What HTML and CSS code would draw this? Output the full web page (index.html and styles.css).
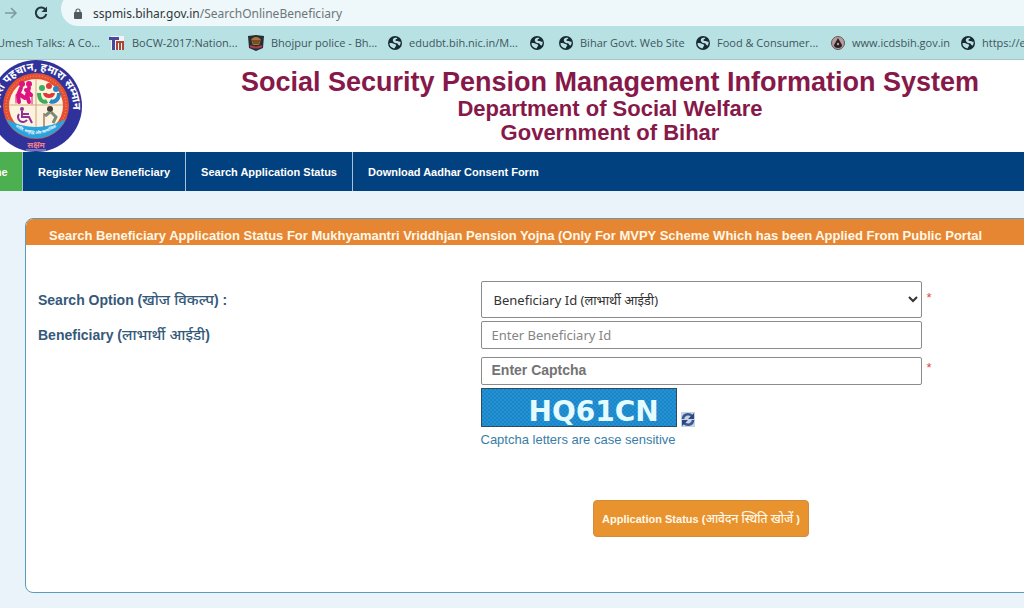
FILE: index.html
```html
<!DOCTYPE html>
<html lang="en">
<head>
<meta charset="utf-8">
<title>Social Security Pension Management Information System</title>
<link rel="stylesheet" href="styles.css">
</head>
<body>
<svg class="defs" width="0" height="0" aria-hidden="true">
  <symbol id="globe" viewBox="0 0 14 14">
    <circle cx="7" cy="7" r="7" fill="#182a30"/>
    <path d="M5 3C6 1.800 8 1.600 9.300 2.100 9.300 3.300 7.600 3.200 7.400 4c-.2.900 1 1 2 1.100 1.500.2 2.300.9 3.200.7.100 1.600-.2 2.600-.8 3.600-1.100.2-1.700-.4-2-1.300C9.400 7 8.200 7.300 7 6.900 5.700 6.500 4.200 5.200 5 3ZM1.400 7.300c1.500-.4 3.200-.3 4.300.4.900.6 2.400.5 2.500 1.500.1 1-.8 1.200-1.100 2-.2.600-.3 1-.8 1.200C3.600 12.200 1.500 10 1.400 7.300Z" fill="#b8e1e4"/>
  </symbol>
</svg>
<div class="browser">
  <div class="toolbar">
    <button class="tool" aria-label="Forward"><svg width="14" height="12" viewBox="0 0 14 12"><path d="M1 6h11M7 1l5 5-5 5" fill="none" stroke="#7d9a9f" stroke-width="1.500"/></svg></button>
    <button class="tool" aria-label="Reload"><svg width="14" height="14" viewBox="0 0 14 14"><path d="M11.600 4A5.300 5.300 0 1 0 12.300 8" fill="none" stroke="#24363b" stroke-width="2"/><path d="M13 .5V6H7.500Z" fill="#24363b"/></svg></button>
    <div class="address">
      <svg width="8" height="11" viewBox="0 0 8 11"><rect y="4" width="8" height="7" rx="1" fill="#50595c"/><path d="M2 5V3a2 2 0 0 1 4 0v2" fill="none" stroke="#50595c" stroke-width="1.200"/></svg>
      <span>sspmis.bihar.gov.in<span class="path">/SearchOnlineBeneficiary</span></span>
    </div>
  </div>
  <nav class="bookmarks" aria-label="Bookmarks">
    <a class="first" href="#">Umesh Talks: A Co...</a>
    <a class="bocw" href="#"><svg width="16" height="16" viewBox="0 0 16 16"><path fill="#f4f4f8" d="M2 1h13v14H2z"/><path d="M0 2h10v3H6v10H3V5H0z" fill="#4b479c"/><path d="M7 6h8v9h-2V8h-1v7h-2V8H9v7H7z" fill="#a64937"/></svg>BoCW-2017:Nation...</a>
    <a class="police" href="#"><svg width="16" height="16" viewBox="0 0 16 16"><path d="M0 1l8-1 8 1-1 12-7 3-7-3z" fill="#292b37"/><path d="M3 5c2-4 8-4 10 0l-2 5H5z" fill="#b27530"/><path d="M3 6h10M5 8h6" stroke="#332c29"/><path d="M2 11c4 2 8 2 12 0" stroke="#a23f43" stroke-width="2" fill="none"/></svg>Bhojpur police - Bh...</a>
    <a class="edu" href="#"><svg width="14" height="14"><use href="#globe"/></svg>edudbt.bih.nic.in/M...</a>
    <a class="blank" href="#" aria-label="Bookmark"><svg width="14" height="14"><use href="#globe"/></svg></a>
    <a class="govt" href="#"><svg width="14" height="14"><use href="#globe"/></svg>Bihar Govt. Web Site</a>
    <a class="food" href="#"><svg width="14" height="14"><use href="#globe"/></svg>Food &amp; Consumer...</a>
    <a class="icds" href="#"><svg width="14" height="14" viewBox="0 0 14 14"><circle cx="7" cy="7" r="6.500" fill="#b79d9d" stroke="#67585c"/><path d="M7 2l4 7a4 3 0 0 1-8 0z" fill="#292226"/><circle cx="7" cy="8" r="1.200" fill="#c99"/></svg>www.icdsbih.gov.in</a>
    <a href="#"><svg width="14" height="14"><use href="#globe"/></svg>https://edudbt.bih.nic.in</a>
  </nav>
</div>
<div class="page">
  <header class="masthead">
    <svg class="logo" width="92" height="92" viewBox="0 0 92 92" role="img" aria-label="Saksham logo">
      <defs><path id="arc" d="M10 56A37 37 0 1 1 82 56"/><path id="low" d="M18 60Q46 88 74 60"/></defs>
      <circle cx="46" cy="46" r="46" fill="#30329b"/>
      <circle cx="46" cy="46" r="33" fill="#e65032"/>
      <circle cx="46" cy="46" r="30" fill="none" stroke="#f6a07e" stroke-dasharray="1 2"/>
      <circle cx="46" cy="46" r="27" fill="#fbf3df"/>
      <path d="M46 19v50M19 45h54" stroke="#d4a77b"/>
      <path d="M16 59Q46 75 76 59A33 33 0 0 1 16 59Z" fill="#2aa4df"/>
      <g fill="none" stroke="#dc147f" stroke-width="4" stroke-linecap="round" stroke-linejoin="round"><path d="M31 28l-3 7 1 7M29 34l6 4M39 28l-2 7 2 7M36 30l5 5"/><path d="M26 35v8M42 34v10" stroke-width="1"/></g>
      <circle cx="32" cy="24" r="3" fill="#dc147f"/><circle cx="39" cy="24" r="3" fill="#dc147f"/>
      <circle cx="52" cy="28" r="3" fill="#3cae59"/><circle cx="59" cy="26" r="3" fill="#df3b34"/><circle cx="66" cy="29" r="3" fill="#2585c6"/>
      <path d="M49 33c0 8 5 10 8 8" fill="none" stroke="#3cae59" stroke-width="4"/><path d="M69 33c0 8-6 10-9 8" fill="none" stroke="#2585c6" stroke-width="4"/><path d="M55 33c0 4 8 4 8 0" fill="none" stroke="#df3b34" stroke-width="4"/>
      <circle cx="32" cy="49" r="2" fill="#8f2f97"/><path d="M32 51v6h7l3 6M33 54h6M29 54a5 5 0 1 0 8 6" fill="none" stroke="#8f2f97" stroke-width="2"/>
      <circle cx="60" cy="49" r="3" fill="#4b4139"/><path d="M60 52l-5 4M61 52l5 5-3 6" stroke="#7e8a76" stroke-width="3" fill="none"/><path d="M54 53v14" stroke="#73422e"/>
      <text class="logo-top"><textPath href="#arc" startOffset="50%" text-anchor="middle">हमारा पहचान, हमारा सम्मान</textPath></text>
      <text class="logo-low"><textPath href="#low" startOffset="50%" text-anchor="middle">शांति, समृद्धि और सामाजिक</textPath></text>
      <text class="logo-name" x="46" y="88" text-anchor="middle">सक्षम</text>
      <path d="M36 90h20" stroke="#b9badc"/>
    </svg>
    <div class="titles">
      <h1>Social Security Pension Management Information System</h1>
      <h2>Department of Social Welfare</h2>
      <h2>Government of Bihar</h2>
    </div>
  </header>
  <nav class="menu" aria-label="Main">
    <a class="home" href="#">Home</a>
    <a href="#">Register New Beneficiary</a>
    <a href="#">Search Application Status</a>
    <a href="#">Download Aadhar Consent Form</a>
  </nav>
  <main class="panel">
    <h3 class="banner">Search Beneficiary Application Status For Mukhyamantri Vriddhjan Pension Yojna (Only For MVPY Scheme Which has been Applied From Public Portal<br><span>for Online)</span></h3>
    <form>
      <div class="row">
        <label for="option">Search Option (<span class="hindi">खोज विकल्प</span>) :</label>
        <select id="option"><option>Beneficiary Id (लाभार्थी आईडी)</option></select>
        <span class="required">*</span>
      </div>
      <div class="row">
        <label for="beneficiary">Beneficiary (<span class="hindi">लाभार्थी आईडी</span>)</label>
        <input id="beneficiary" type="text" placeholder="Enter Beneficiary Id">
      </div>
      <div class="row captcha-row">
        <input id="captcha" class="captcha-input" type="text" placeholder="Enter Captcha" aria-label="Enter Captcha">
        <span class="required">*</span>
        <div class="captcha">
          <div class="code">HQ61CN</div>
          <button class="refresh" type="button" aria-label="Refresh captcha"><svg width="14" height="15" viewBox="0 0 14 15"><path fill="#c9d3e6" d="M0 0h14v15H0z"/><path d="M2 7C2 2 8 1 11 4M12 8c0 5-6 6-9 3" fill="none" stroke="#3c5a92" stroke-width="2.500"/><path d="M13 1v6H7zM1 14V8h6z" fill="#2c477f"/></svg></button>
        </div>
        <p class="note">Captcha letters are case sensitive</p>
      </div>
      <button class="submit" type="submit">Application Status (<span class="hindi">आवेदन स्थिति खोजें</span> )</button>
    </form>
  </main>
</div>
</body>
</html>
```
FILE: styles.css
```css
* { box-sizing: border-box; }
body {
  margin: 0;
  min-height: 100vh;
  overflow: hidden;
  background: #ebf3fa;
  font-family: "Liberation Sans", "Noto Sans", "Noto Sans Devanagari", sans-serif;
}
a { text-decoration: none; color: inherit; }
button { border: 0; padding: 0; background: none; }
svg { display: block; flex: none; }
.defs { position: absolute; }

.browser {
  background: #b8e1e4;
  border-bottom: 1px solid #a9c5c8;
  font-family: "Open Sans", sans-serif;
  color: #3e565b;
}
.toolbar { display: flex; height: 26px; align-items: center; }
.tool { width: 14px; margin: 0 16px 0 4px; }
.tool + .tool { margin: 0 13px 0 0; }
.address {
  flex: 1;
  display: flex;
  align-items: center;
  gap: 11px;
  height: 34px;
  margin-top: -8px;
  padding: 8px 13px 0;
  border-radius: 17px 0 0 17px;
  background: #eef7f9;
  font: 12px "Noto Sans", sans-serif;
  color: #2f383b;
}
.path { color: #6c7679; }
.bookmarks {
  display: flex;
  align-items: center;
  height: 33px;
  overflow: hidden;
  white-space: nowrap;
  font-size: 11px;
}
.bookmarks a { display: flex; align-items: center; gap: 7px; flex: none; }
.bookmarks .first { width: 112px; margin-left: -3px; }
.bookmarks .bocw { width: 139px; }
.bookmarks .police { width: 140px; }
.bookmarks .edu { width: 142px; }
.bookmarks .blank { width: 29px; }
.bookmarks .govt { width: 137px; }
.bookmarks .food { width: 135px; }
.bookmarks .icds { width: 130px; }

.page { width: calc(100% + 376px); }
.masthead { display: flex; height: 92px; background: #fff; }
.logo { margin-left: -10px; }
.logo text { fill: #fff; font-family: "Noto Sans", "Noto Sans Devanagari", sans-serif; font-weight: 700; }
.logo-top { font-size: 11px; }
.logo .logo-low { font-size: 4px; }
.logo .logo-name { fill: #ef7e88; font-size: 8px; }
.titles {
  flex: 1;
  padding: 8px 262px 0 0;
  text-align: center;
  color: #86194a;
}
h1, h2, h3, p { margin: 0; }
h1 { font-size: 27px; line-height: 29px; }
h2 { font-size: 22px; line-height: 24px; }

.menu {
  display: flex;
  height: 39px;
  background: #02417f;
  color: #fff;
  font-size: 11px;
  font-weight: 700;
}
.menu a { display: flex; align-items: center; padding: 0 15px; border-right: 1px solid #a9c1d8; }
.menu a:last-child { border: 0; }
.menu .home { margin-left: -38px; width: 61px; background: #4caf50; }

.panel {
  margin: 27px 25px 0;
  height: 375px;
  border: 1px solid #5b9db8;
  border-radius: 8px;
  background: #fff;
  overflow: hidden;
}
.banner {
  height: 26px;
  padding: 9px 23px 0;
  overflow: hidden;
  white-space: nowrap;
  background: #e68632;
  color: #fff8e8;
  font-size: 13px;
  line-height: 15px;
}
.banner span { display: block; text-align: center; }
form { padding: 36px 10px 0 12px; }
.row {
  display: grid;
  grid-template-columns: 1fr 441px 1fr;
  column-gap: 2px;
  align-items: center;
  margin-bottom: 3px;
}
label { color: #35597a; font-size: 14px; line-height: 20px; font-weight: 700; }
.hindi { font-size: 15px; font-weight: 500; }
select, input {
  width: 100%;
  height: 28px;
  margin: 0;
  border: 1px solid #8b8b8b;
  border-radius: 2px;
  background: #fff;
  color: #333;
  padding: 0 10px;
  font: 13px "Noto Sans", sans-serif;
}
select { height: 37px; padding: 0 8px; }
input::placeholder { color: #858585; opacity: 1; }
.captcha-input { grid-column: 2; padding-bottom: 2px; font: 700 14px "Liberation Sans", sans-serif; }
.captcha-input::placeholder { color: #737373; }
.required { align-self: start; padding: 9px 3px 0; color: #e0444a; font-size: 13px; line-height: 16px; }
.captcha-row { margin-top: 8px; row-gap: 3px; }
.captcha-row .required { padding-top: 3px; }
.captcha { grid-column: 2; display: flex; align-items: flex-end; gap: 4px; }
.code {
  width: 196px;
  height: 39px;
  padding: 7px 0 0 47px;
  border: 1px solid #2b4d61;
  background: repeating-conic-gradient(#1a86ca 0 25%, #2792d2 0 50%) 0 0 / 4px 4px;
  color: #e4fbff;
  font: 700 28px/32px "DejaVu Sans", sans-serif;
}
.note { grid-column: 2; color: #397da6; font-size: 13px; line-height: 20px; }
.submit {
  display: block;
  margin: 50px auto 0;
  height: 37px;
  padding: 0 8px;
  border: 1px solid #d48c3c;
  border-radius: 4px;
  background: #e9932e;
  color: #fff8ea;
  font: 700 11px "Liberation Sans", "Noto Sans", "Noto Sans Devanagari", sans-serif;
}
.submit .hindi { font-size: 12px; }
```
